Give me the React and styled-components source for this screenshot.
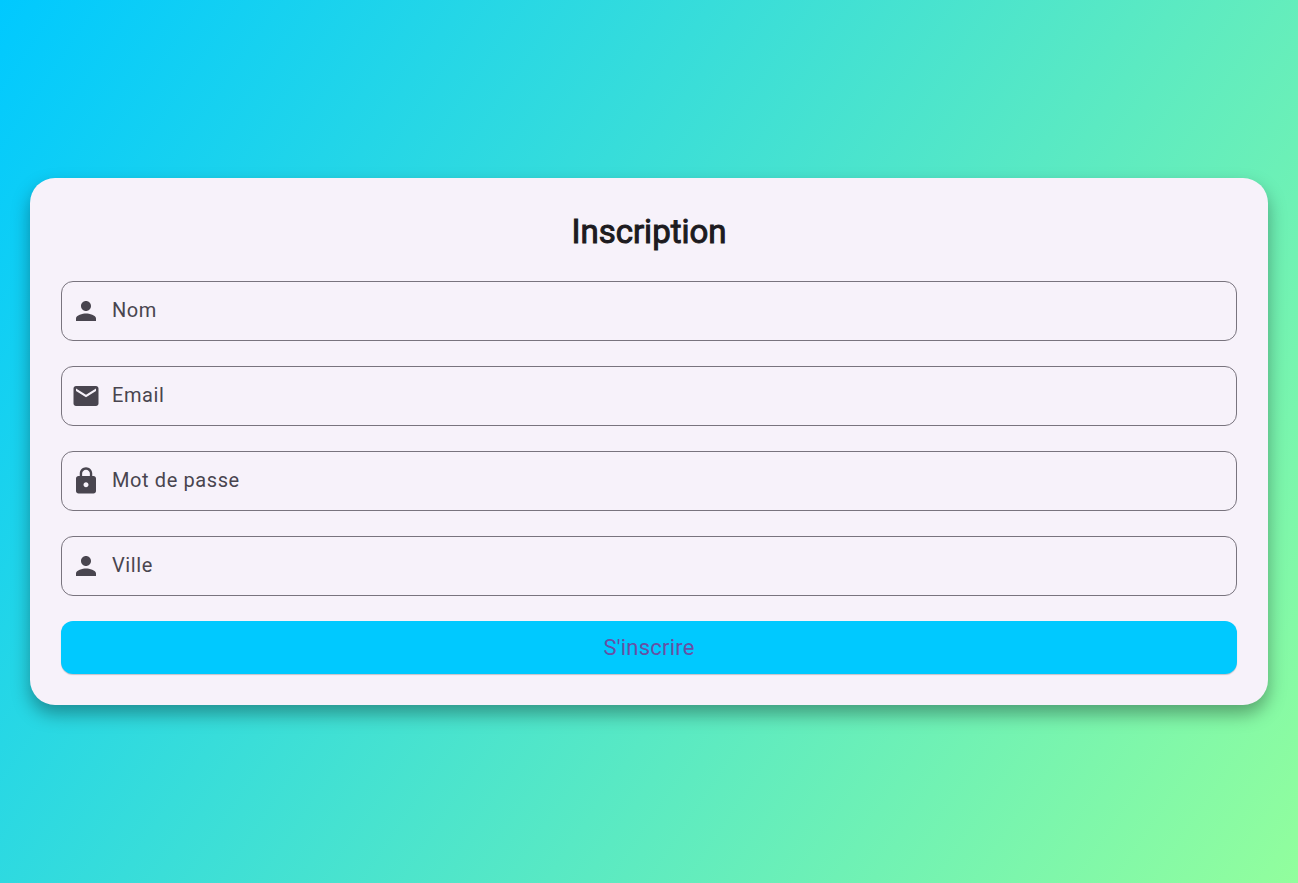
import React from "react";
import styled, { createGlobalStyle } from "styled-components";
import { MdPerson, MdEmail, MdLock } from "react-icons/md";

const GlobalStyle = createGlobalStyle`
  *, *::before, *::after { box-sizing: border-box; }
  body { margin: 0; font-family: Roboto, sans-serif; }
`;

const Page = styled.main`
  min-height: 100vh;
  display: flex;
  align-items: center;
  padding: 30px;
  background: linear-gradient(124deg, #00c9ff, #92fe9d);
`;

const Card = styled.form`
  flex: 1;
  display: flex;
  flex-direction: column;
  gap: 25px;
  padding: 31px;
  border-radius: 25px;
  background: #f7f2fa;
  box-shadow: 0 9px 18px rgba(0, 0, 0, 0.34);
`;

const Title = styled.h1`
  margin: 0;
  padding-bottom: 2px;
  line-height: 45px;
  text-align: center;
  font-size: 33px;
  font-weight: 400;
  -webkit-text-stroke: 1px currentColor;
  color: #1d1b20;
`;

const Field = styled.label`
  display: flex;
  align-items: center;
  height: 60px;
  padding: 0 9px;
  gap: 11px;
  border: 1px solid #79747e;
  border-radius: 12px;
  color: #49454f;

  svg { flex: none; width: 30px; height: 30px; }
`;

const Input = styled.input`
  flex: 1;
  min-width: 0;
  border: 0;
  outline: 0;
  padding: 0 0 2px;
  background: transparent;
  font: 400 20px/30px Roboto, sans-serif;
  letter-spacing: 0.03em;
  color: #1d1b20;

  &::placeholder { color: #49454f; opacity: 1; }
`;

const Submit = styled.button`
  height: 53px;
  border: 0;
  border-radius: 12px;
  background: #00c9ff;
  box-shadow: 0 1px 1px rgba(0, 0, 0, 0.2);
  font: 400 22px/30px Roboto, sans-serif;
  letter-spacing: 0.01em;
  color: #6750a4;
  cursor: pointer;
`;

const fields = [
  { name: "nom", label: "Nom", type: "text", Icon: MdPerson },
  { name: "email", label: "Email", type: "email", Icon: MdEmail },
  { name: "password", label: "Mot de passe", type: "password", Icon: MdLock },
  { name: "ville", label: "Ville", type: "text", Icon: MdPerson },
];

export default function App() {
  return (
    <>
      <GlobalStyle />
      <Page>
        <Card onSubmit={(e) => e.preventDefault()}>
          <Title>Inscription</Title>
          {fields.map(({ name, label, type, Icon }) => (
            <Field key={name}>
              <Icon aria-hidden="true" />
              <Input name={name} type={type} placeholder={label} aria-label={label} />
            </Field>
          ))}
          <Submit type="submit">S'inscrire</Submit>
        </Card>
      </Page>
    </>
  );
}
